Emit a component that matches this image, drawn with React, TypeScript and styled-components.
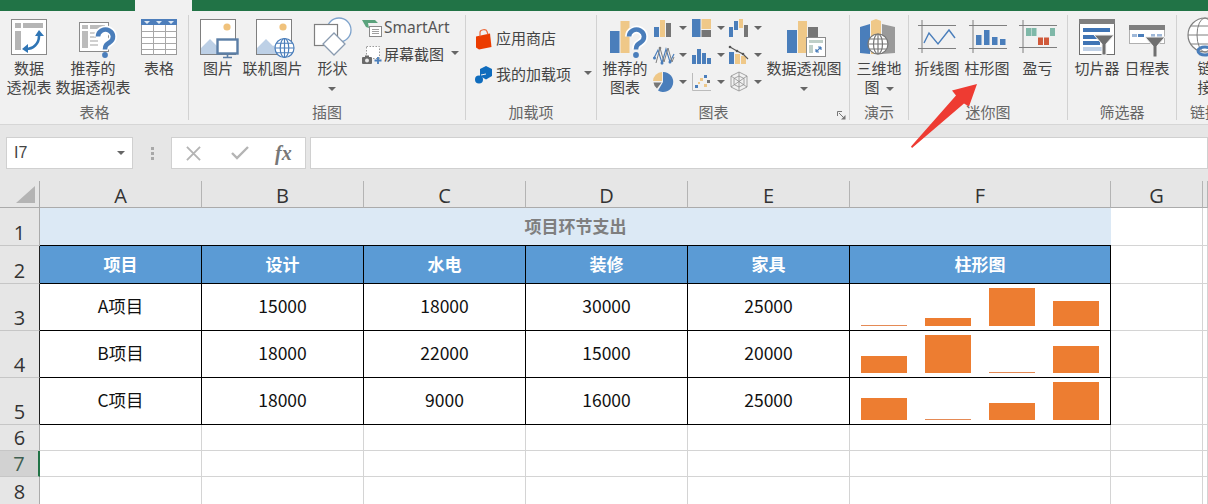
import React from "react";
import styled, { createGlobalStyle } from "styled-components";

const Global = createGlobalStyle`
  html, body { margin: 0; padding: 0; overflow: hidden; background: #fff; }
  body { font-family: "Noto Sans CJK SC", "Noto Sans", sans-serif; color: #444; }
  svg { overflow: visible; display: block; flex: none; }
  * { box-sizing: border-box; }
`;

const Page = styled.div`
  width: 1208px;
  height: 504px;
  overflow: hidden;
  position: relative;
`;

/* ---------- Title strip ---------- */
const TopStrip = styled.div`
  display: flex;
  height: 11px;
  background: #217346;
`;
const ActiveTab = styled.div`
  width: 57px;
  margin-left: 135px;
  background: #f1f1f1;
`;

/* ---------- Ribbon ---------- */
const Ribbon = styled.div`
  display: flex;
  height: 114px;
  background: #f1f1f1;
  border-bottom: 1px solid #d6d6d6;
  overflow: hidden;
`;
const Group = styled.section<{ $w: number }>`
  position: relative;
  flex: none;
  width: ${(p) => p.$w}px;
  height: 113px;
  display: flex;
  flex-direction: column;
  &::after {
    content: "";
    position: absolute;
    right: 0;
    top: 4px;
    bottom: 4px;
    width: 1px;
    background: #d2d2d2;
  }
`;
const GroupBody = styled.div<{ $pad?: number }>`
  display: flex;
  height: 91px;
  padding-left: ${(p) => p.$pad ?? 0}px;
`;
const GroupLabel = styled.div<{ $shift?: number }>`
  font-size: 15px;
  line-height: 19px;
  text-align: center;
  color: #666;
  padding-right: ${(p) => p.$shift ?? 1}px;
`;
const LargeButton = styled.div<{ $w: number }>`
  flex: none;
  width: ${(p) => p.$w}px;
  display: flex;
  flex-direction: column;
  align-items: center;
`;
const IconSlot = styled.div`
  height: 47px;
  padding-top: 7px;
`;
const ButtonLabel = styled.div`
  font-size: 15px;
  line-height: 19px;
  text-align: center;
  white-space: pre-line;
  color: #444;
`;
const Caret = styled.span<{ $inline?: boolean; $gap?: number }>`
  display: inline-block;
  flex: none;
  width: 0;
  height: 0;
  border-left: 4px solid transparent;
  border-right: 4px solid transparent;
  border-top: 4px solid #666;
  vertical-align: middle;
  margin-left: ${(p) => p.$gap ?? (p.$inline ? 6 : 0)}px;
`;
const SmallStack = styled.div<{ $rowH: number; $top: number }>`
  display: grid;
  grid-auto-rows: ${(p) => p.$rowH}px;
  padding-top: ${(p) => p.$top}px;
`;
const SmallRow = styled.div<{ $iconGap: number }>`
  display: flex;
  align-items: center;
  gap: ${(p) => p.$iconGap}px;
  font-size: 15px;
  color: #444;
  white-space: nowrap;
`;
const SmartArtText = styled.span`
  font-family: "Noto Sans", sans-serif;
  font-size: 15.5px;
  color: #555;
`;
const ChartPicker = styled.div`
  display: grid;
  grid-template-columns: 38px 37px 35px;
  grid-auto-rows: 27px;
  padding-top: 3px;
  margin-left: 5px;
  width: 110px;
`;
const ChartPick = styled.div`
  display: flex;
  align-items: center;
  gap: 5px;
`;
const Launcher = styled.div`
  position: absolute;
  right: 4px;
  bottom: 4px;
  width: 9px;
  height: 9px;
`;

/* ---------- Formula bar ---------- */
const FormulaBar = styled.div`
  height: 56px;
  background: #e6e6e6;
  display: flex;
  align-items: flex-start;
  padding: 12px 0 0 6px;
`;
const NameBox = styled.div`
  width: 127px;
  height: 32px;
  background: #fff;
  border: 1px solid #d0d0d0;
  display: flex;
  align-items: center;
  justify-content: space-between;
  padding: 0 7px;
  font-family: "Liberation Sans", sans-serif;
  font-size: 16px;
  color: #444;
`;
const Grip = styled.div`
  width: 38px;
  height: 32px;
  display: flex;
  flex-direction: column;
  align-items: center;
  justify-content: center;
  gap: 2px;
  span { width: 3px; height: 3px; background: #a8a8a8; }
`;
const FxBox = styled.div`
  width: 135px;
  height: 32px;
  background: #fff;
  border: 1px solid #d0d0d0;
  display: flex;
  align-items: center;
  padding-left: 14px;
  gap: 30px;
`;
const FxGlyph = styled.span`
  font-family: "Liberation Serif", serif;
  font-style: italic;
  font-weight: bold;
  font-size: 20px;
  line-height: 1;
  color: #777;
  margin-left: -4px;
`;
const FormulaInput = styled.div`
  flex: 1;
  height: 32px;
  margin-left: 4px;
  background: #fff;
  border: 1px solid #d0d0d0;
`;

/* ---------- Sheet ---------- */
const Sheet = styled.div`
  display: grid;
  grid-template-columns: 40px 162px 162px 162px 162px 162px 261px 92px 1fr;
  grid-template-rows: 27px 38px 38px 47px 47px 47px 26px 26px 28px;
  font-family: "Noto Sans CJK SC", sans-serif;
`;
const Corner = styled.div`
  background: #e6e6e6;
  border-right: 1px solid #ababab;
  border-bottom: 1px solid #ababab;
  padding: 5px 3px 0 0;
  display: flex;
  justify-content: flex-end;
`;
const ColHead = styled.div`
  background: #e6e6e6;
  border-right: 1px solid #b4b4b4;
  border-bottom: 1px solid #ababab;
  font-family: "Open Sans", sans-serif;
  font-size: 20px;
  line-height: 30px;
  text-align: center;
  color: #333;
`;
const RowHead = styled.div<{ $dark?: boolean; $active?: boolean }>`
  background: ${(p) => (p.$active ? "#d2d2d2" : "#e6e6e6")};
  border-right: ${(p) => (p.$active ? "2px solid #217346" : p.$dark ? "1px solid #222" : "1px solid #ababab")};
  border-bottom: 1px solid #c6c6c6;
  font-family: "Open Sans", sans-serif;
  font-size: 20px;
  line-height: 24px;
  color: ${(p) => (p.$active ? "#3f5f50" : "#333")};
  display: flex;
  align-items: flex-end;
  justify-content: center;
`;
const TitleCell = styled.div`
  grid-column: span 6;
  background: #dce9f5;
  border-bottom: 1px solid #000;
  font-size: 17px;
  font-weight: 700;
  color: #7f7f7f;
  display: flex;
  align-items: center;
  justify-content: center;
  padding-bottom: 3px;
`;
const HeadCell = styled.div`
  background: #5b9bd5;
  border-right: 1px solid #000;
  border-bottom: 1px solid #000;
  color: #fff;
  font-size: 17px;
  font-weight: 700;
  display: flex;
  align-items: center;
  justify-content: center;
  padding-bottom: 2px;
`;
const DataCell = styled.div`
  background: #fff;
  border-right: 1px solid #000;
  border-bottom: 1px solid #000;
  color: #111;
  font-size: 17.5px;
  display: flex;
  align-items: center;
  justify-content: center;
  padding-bottom: 4px;
`;
const SparkCell = styled.div`
  background: #fff;
  border-right: 1px solid #000;
  border-bottom: 1px solid #000;
  display: flex;
  align-items: flex-end;
  gap: 18px;
  padding: 0 0 4px 11px;
`;
const SparkBar = styled.div<{ $h: number }>`
  width: 46px;
  height: ${(p) => p.$h}px;
  background: ${(p) => (p.$h < 2 ? "#e58a55" : "#ed7d31")};
`;
const Blank = styled.div`
  background: #fff;
  border-right: 1px solid #d4d4d4;
  border-bottom: 1px solid #d4d4d4;
`;
const ArrowMark = styled.svg`
  position: absolute;
  left: 905px;
  top: 78px;
`;

/* ---------- Icons ---------- */
const BLUE = "#4a7ebb";
const YEL = "#efc888";
const GRY = "#767676";

const Big = ({ children }: { children: React.ReactNode }) => (
  <svg width="40" height="40" viewBox="0 0 40 40">{children}</svg>
);
const Mini = ({ children, w = 20, h = 18, dy = 0 }: { children: React.ReactNode; w?: number; h?: number; dy?: number }) => (
  <svg width={w} height={h} viewBox={`0 ${-dy} ${w} ${h}`}>{children}</svg>
);
const Question = ({ x, y, s = 1 }: { x: number; y: number; s?: number }) => (
  <g transform={`translate(${x} ${y}) scale(${s})`} fill="none">
    <path d="M-7 -6.5 a7.5 7 0 1 1 11.5 6 c-3 2 -4.5 3 -4.5 7" stroke="#fff" strokeWidth="8" />
    <path d="M-7 -6.5 a7.5 7 0 1 1 11.5 6 c-3 2 -4.5 3 -4.5 7" stroke={BLUE} strokeWidth="4.6" />
    <circle cx="0" cy="12" r="2.9" fill={BLUE} />
  </g>
);
const Globe = ({ cx, cy, r, c = BLUE }: { cx: number; cy: number; r: number; c?: string }) => (
  <g fill="#fff" stroke={c} strokeWidth="1.2">
    <circle cx={cx} cy={cy} r={r} />
    <ellipse cx={cx} cy={cy} rx={r * 0.45} ry={r} fill="none" />
    <path d={`M${cx - r} ${cy}h${2 * r}M${cx - r * 0.85} ${cy - r * 0.5}h${1.7 * r}M${cx - r * 0.85} ${cy + r * 0.5}h${1.7 * r}M${cx} ${cy - r}v${2 * r}`} fill="none" />
  </g>
);

const PivotIcon = () => (
  <Big>
    <rect x="2.5" y="1.5" width="35" height="35" fill="#fff" stroke="#8a8a8a" />
    <path d="M6 5h6v5H6zM14 5h20v5H14zM6 13h6v19H6z" fill="#b5b5b5" />
    <path d="M17 31c7 0 13-5 13-13" fill="none" stroke="#2f75b5" strokeWidth="2.6" />
    <path d="M30 12l5 6h-9zM13 31l6-5v9z" fill="#2f75b5" />
  </Big>
);
const RecPivotIcon = () => (
  <Big>
    <rect x="6.5" y="4.5" width="29" height="29" fill="#fff" stroke="#8a8a8a" />
    <path d="M9 7h6v4H9zM17 7h15v4H17zM9 13h6v17H9z" fill="#bcbcbc" />
    <path d="M17 15h8M17 19h6M17 23h8M17 27h8" stroke="#d0d0d0" strokeWidth="2" />
    <Question x={32} y={25} />
  </Big>
);
const TableIcon = () => (
  <Big>
    <rect x="2.5" y="1.5" width="35" height="35" fill="#fff" stroke="#9a9a9a" />
    <path d="M2.5 13.5h35M2.5 19.5h35M2.5 25.5h35M2.5 31.5h35M14.5 7v30M26.5 7v30" stroke="#a8a8a8" />
    <rect x="2" y="1" width="36" height="6" fill="#4d7ebb" />
    <path d="M5 3h6l-3 3zM17 3h6l-3 3zM29 3h6l-3 3z" fill="#dfe9f4" />
  </Big>
);
const Landscape = ({ x }: { x: number }) => (
  <>
    <rect x={x + 0.5} y="1.5" width="35" height="35" fill="#fff" stroke="#7f7f7f" />
    <path d={`M${x + 1} 36V30l9-9 7 7 4-2 14 10z`} fill="#bdd0e6" />
    <circle cx={x + 27} cy="9" r="3.6" fill="#f0c27c" />
  </>
);
const PictureIcon = () => (
  <Big>
    <Landscape x={2} />
    <rect x="19.5" y="21.5" width="20" height="14" fill="#fff" stroke="#5b7ea6" strokeWidth="2.4" />
    <path d="M29.5 36v3M25 39.5h9" stroke="#5b7ea6" strokeWidth="1.6" />
  </Big>
);
const OnlinePictureIcon = () => (
  <Big>
    <Landscape x={3} />
    <Globe cx={31.5} cy={30} r={9.5} />
  </Big>
);
const ShapesIcon = () => (
  <Big>
    <circle cx="26" cy="12" r="12" fill="#fff" stroke="#7ea3cc" strokeWidth="1.3" />
    <rect x="1.5" y="6.5" width="23" height="21" fill="#fff" stroke="#7f7f7f" strokeWidth="1.2" />
    <path d="M21 15l11 11-11 11-11-11z" fill="#fff" stroke="#8a9bb0" strokeWidth="1.3" />
  </Big>
);
const SmartArtIcon = () => (
  <Mini w={22} h={19} dy={1}>
    <path d="M1 1h13l3 3-10 0 1 5-3-1-4-7z" fill="#5aa27c" />
    <rect x="8.5" y="7.5" width="12" height="10" fill="#fff" stroke="#8a8a8a" />
    <path d="M11 10.5h7M11 12.5h7M11 14.5h7" stroke="#a0a0a0" />
  </Mini>
);
const ScreenshotIcon = () => (
  <Mini w={22} h={19} dy={2}>
    <rect x="5.5" y="0.5" width="13" height="12" fill="#fff" stroke="#9a9a9a" strokeDasharray="1.5 1.5" />
    <rect x="1" y="11" width="10" height="7" rx="1" fill="#6a6a6a" />
    <rect x="4" y="9.5" width="4" height="2" fill="#6a6a6a" />
    <circle cx="6" cy="14.5" r="2" fill="#e8e8e8" />
    <path d="M17 11v7M13.5 14.5h7" stroke="#4a7ebb" strokeWidth="1.8" />
  </Mini>
);
const StoreIcon = () => (
  <Mini w={17} h={21} dy={1.5}>
    <path d="M1 8l14-3 1.5 13.5L4 21l-3-2z" fill="#eb3c00" />
    <path d="M5 8V4c0-3 6-4 7-1l1 3" fill="none" stroke="#eb6a3c" strokeWidth="1.2" />
  </Mini>
);
const AddinIcon = () => (
  <Mini w={17} h={18} dy={2}>
    <path d="M11 0l6 3v7l-6 3.5-6-3.500V3z" fill="#0f6cbd" />
    <circle cx="4" cy="13.500" r="4" fill="#0f6cbd" />
    <path d="M6 9l5-1" stroke="#f1f1f1" strokeWidth="1" />
  </Mini>
);
const RecChartIcon = () => (
  <Big>
    <rect x="5" y="13" width="9.500" height="22" fill={BLUE} />
    <rect x="15.500" y="3" width="9" height="32" fill={YEL} />
    <rect x="25.500" y="9" width="8" height="3" fill={GRY} />
    <Question x={31} y={25} />
  </Big>
);
const PivotChartIcon = () => (
  <Big>
    <rect x="3" y="12" width="10" height="23" fill={BLUE} />
    <rect x="14" y="3" width="9" height="32" fill={YEL} />
    <rect x="24" y="9" width="10" height="10" fill={GRY} />
    <rect x="22.500" y="19.500" width="19" height="19" fill="#fff" stroke="#8a8a8a" />
    <path d="M25 22h14v3H25zM25 27h4v8h-4z" fill="#bfcfc8" />
    <path d="M32 34l5-5M37 29h-3M37 29v3M32 34h3M32 34v-3" stroke="#4a7ebb" strokeWidth="1.2" fill="none" />
  </Big>
);
const MapIcon = () => (
  <Big>
    <path d="M1 9l10-3v30l-10-1z" fill={BLUE} />
    <path d="M12 3l5-2 5 2v33H12z" fill={YEL} />
    <path d="M23 6l13 3v26l-13 1z" fill="#9a9a9a" />
    <Globe cx={19} cy={26} r={10} c="#777" />
  </Big>
);
const FrameLines = ({ x, top, bottom }: { x: number; top: number; bottom: number }) => (
  <path d={`M${x} ${top}h38M${x} ${bottom}h38M${x + 4} 2v33`} stroke="#7f7f7f" strokeWidth="1" fill="none" />
);
const LineSparkIcon = () => (
  <Big>
    <FrameLines x={1} top={7.5} bottom={30.5} />
    <path d="M7 25l5-10 9 11 11-14 6 8" fill="none" stroke={BLUE} strokeWidth="1.4" />
  </Big>
);
const ColumnSparkIcon = () => (
  <Big>
    <FrameLines x={2} top={7.5} bottom={30.5} />
    <path d="M9 17h5.500v10H9zM17 12h5.500v15H17zM25 19h5.500v8H25zM33 21h5.500v6H33z" fill={BLUE} />
  </Big>
);
const WinLossIcon = () => (
  <Big>
    <FrameLines x={1} top={7.5} bottom={29.5} />
    <path d="M8 10h5v8H8zM13.500 10h5v8h-5zM32 10h5v8h-5z" fill="#7fb8a8" />
    <path d="M20 19.500h5V27h-5zM26 19.500h5V27h-5z" fill="#d0593a" />
  </Big>
);
const Funnel = ({ x, y, s = 1 }: { x: number; y: number; s?: number }) => (
  <g transform={`translate(${x} ${y}) scale(${s})`}>
    <path d="M0 0h20l-8 9v11h-4V9z" fill="#6f6f6f" stroke="#f1f1f1" strokeWidth="1" />
  </g>
);
const SlicerIcon = () => (
  <Big>
    <rect x="2.500" y="1.500" width="35" height="35" fill="#fff" stroke="#6f6f6f" />
    <rect x="2" y="1" width="36" height="5" fill="#7f7f7f" />
    <path d="M6 10h27v4H6zM6 17h17v4H6zM6 23h17v4H6z" fill="#3f74b5" />
    <rect x="6" y="29" width="20" height="4" fill="#bfd0e6" />
    <Funnel x={17} y={17} />
  </Big>
);
const TimelineIcon = () => (
  <Big>
    <rect x="2.500" y="7.500" width="35" height="18" fill="#fff" stroke="#b0b0b0" />
    <rect x="2" y="7" width="36" height="5" fill="#7f7f7f" />
    <path d="M5 16h5v3H5zM11 16h6v3h-6zM24 16h4v3h-4zM30 16h5v3h-5z" fill="#9fb8d8" />
    <path d="M11 16h6v3h-6z" fill="#4a7ebb" />
    <Funnel x={18} y={19} />
  </Big>
);
const LinkIcon = () => (
  <Big>
    <circle cx="20" cy="17" r="17" fill="#fff" stroke="#7f7f7f" strokeWidth="1.2" />
    <ellipse cx="20" cy="17" rx="8" ry="17" fill="none" stroke="#7f7f7f" />
    <path d="M3 17h34M6 8h28M6 26h28" stroke="#7f7f7f" />
    <ellipse cx="20" cy="33" rx="7" ry="4" fill="none" stroke="#4a7ebb" strokeWidth="3" />
  </Big>
);

const ColumnMini = () => (
  <Mini><path d="M0 8h5v10H0z" fill={BLUE} /><path d="M6 1h5v17H6z" fill={YEL} /><path d="M12 4h5v14h-5z" fill={GRY} /></Mini>
);
const TreemapMini = () => (
  <Mini><path d="M0 0h8.500v18H0z" fill={BLUE} /><path d="M9.500 0H19v10H9.500z" fill={YEL} /><path d="M9.500 11H19v7H9.500z" fill={GRY} /></Mini>
);
const WaterfallMini = () => (
  <Mini><path d="M0 8h4v10H0zM5 2h4v9H5z" fill={BLUE} /><path d="M10 0h4v9h-4z" fill={YEL} /><path d="M15 6h4v12h-4z" fill={GRY} /></Mini>
);
const LineMini = () => (
  <Mini>
    <path d="M0 12L4 4l4 13 4-14 4 13 4-8" fill="none" stroke={BLUE} strokeWidth="1.2" />
    <path d="M2 17L6 2l4 14 4-14 4 14 2-5" fill="none" stroke="#7f7f7f" strokeWidth="1" />
    <circle cx="0.500" cy="12" r="1.500" fill={BLUE} /><circle cx="6" cy="2" r="1.300" fill="#7f7f7f" /><circle cx="8" cy="17" r="1.500" fill={BLUE} /><circle cx="16" cy="16" r="1.500" fill={BLUE} />
  </Mini>
);
const HistogramMini = () => (
  <Mini><path d="M0 9h4v9H0zM5 3h4v15H5zM10 7h4v11h-4zM15 12h4v6h-4z" fill={BLUE} /></Mini>
);
const ComboMini = () => (
  <Mini>
    <path d="M0 6h5v12H0z" fill={BLUE} /><path d="M6 8h5v10H6zM12 10h5v8h-5z" fill={YEL} />
    <path d="M1 1l7 4 6 3 5 5" fill="none" stroke="#555" strokeWidth="1.1" />
    <circle cx="1" cy="1" r="1.300" fill="#555" /><circle cx="8" cy="5" r="1.300" fill="#555" /><circle cx="14" cy="8" r="1.300" fill="#555" />
  </Mini>
);
const PieMini = () => (
  <Mini>
    <path d="M9 9V-1a10 10 0 1 1-5 18.500z" fill={BLUE} />
    <path d="M8 8V-1A9.500 9.500 0 0 0-1 8z" fill={YEL} />
    <path d="M7.500 9.500H-0.500a9 9 0 0 0 3.500 6z" fill={GRY} />
  </Mini>
);
const ScatterMini = () => (
  <Mini>
    <path d="M0.500 0v17.500H19" fill="none" stroke="#bbb" />
    <path d="M3 12h3v3H3z" fill={BLUE} /><path d="M8 5h3v3H8zM12 11h3v3h-3z" fill={YEL} /><path d="M12 2h3v3h-3z" fill={BLUE} /><path d="M15 7h3v3h-3z" fill={GRY} /><path d="M6 9h2v2H6z" fill={YEL} />
  </Mini>
);
const RadarMini = () => (
  <Mini>
    <g fill="none" stroke="#8f8f8f" strokeWidth="0.800">
      <path d="M10 -1l8 4v11l-8 4-8-4V3z" />
      <path d="M10 3l5 2.500v6L10 14l-5-2.500v-6z" />
      <path d="M10 -1v19M2 3l16 11M18 3L2 14" />
    </g>
  </Mini>
);

const pickers = [
  <ColumnMini />, <TreemapMini />, <WaterfallMini />,
  <LineMini />, <HistogramMini />, <ComboMini />,
  <PieMini />, <ScatterMini />, <RadarMini />,
];

const columns = ["A", "B", "C", "D", "E", "F", "G"];
const headers = ["项目", "设计", "水电", "装修", "家具", "柱形图"];
const rows = [
  { no: 3, cells: ["A项目", "15000", "18000", "30000", "25000"], bars: [1, 8, 38, 25] },
  { no: 4, cells: ["B项目", "18000", "22000", "15000", "20000"], bars: [17, 38, 1, 27] },
  { no: 5, cells: ["C项目", "18000", "9000", "16000", "25000"], bars: [22, 1, 17, 38] },
];

const Big2 = ({ w, icon, label }: { w: number; icon: React.ReactNode; label: React.ReactNode }) => (
  <LargeButton $w={w}>
    <IconSlot>{icon}</IconSlot>
    <ButtonLabel>{label}</ButtonLabel>
  </LargeButton>
);

export default function App() {
  return (
    <Page>
      <Global />
      <TopStrip><ActiveTab /></TopStrip>
      <Ribbon>
        <Group $w={189}>
          <GroupBody $pad={5}>
            <Big2 w={48} icon={<PivotIcon />} label={"数据\n透视表"} />
            <Big2 w={80} icon={<RecPivotIcon />} label={"推荐的\n数据透视表"} />
            <Big2 w={52} icon={<TableIcon />} label="表格" />
          </GroupBody>
          <GroupLabel $shift={0}>表格</GroupLabel>
        </Group>
        <Group $w={277}>
          <GroupBody $pad={6}>
            <Big2 w={46} icon={<PictureIcon />} label="图片" />
            <Big2 w={63} icon={<OnlinePictureIcon />} label="联机图片" />
            <Big2 w={57} icon={<ShapesIcon />} label={<>形状{"\n"}<Caret /></>} />
            <SmallStack $rowH={26} $top={3}>
              <SmallRow $iconGap={1}><SmartArtIcon /><SmartArtText>SmartArt</SmartArtText></SmallRow>
              <SmallRow $iconGap={1}><ScreenshotIcon />屏幕截图<Caret $inline /></SmallRow>
            </SmallStack>
          </GroupBody>
          <GroupLabel>插图</GroupLabel>
        </Group>
        <Group $w={131}>
          <GroupBody $pad={9}>
            <SmallStack $rowH={36} $top={8}>
              <SmallRow $iconGap={4}><StoreIcon />应用商店</SmallRow>
              <SmallRow $iconGap={4}><AddinIcon />我的加载项<Caret $inline $gap={9} /></SmallRow>
            </SmallStack>
          </GroupBody>
          <GroupLabel>加载项</GroupLabel>
        </Group>
        <Group $w={253}>
          <GroupBody $pad={4}>
            <Big2 w={48} icon={<RecChartIcon />} label={"推荐的\n图表"} />
            <ChartPicker>
              {pickers.map((icon, i) => (
                <ChartPick key={i}>{icon}<Caret /></ChartPick>
              ))}
            </ChartPicker>
            <Big2 w={80} icon={<PivotChartIcon />} label={<>数据透视图{"\n"}<Caret /></>} />
          </GroupBody>
          <GroupLabel $shift={20}>图表</GroupLabel>
          <Launcher>
            <svg width="9" height="9" viewBox="0 0 9 9">
              <path d="M0.500 5V0.500H5M2 2l5 5" fill="none" stroke="#777" />
              <path d="M8.500 4v4.500H4z" fill="#777" />
            </svg>
          </Launcher>
        </Group>
        <Group $w={59}>
          <GroupBody>
            <Big2 w={58} icon={<MapIcon />} label={<>三维地{"\n"}图<Caret $inline /></>} />
          </GroupBody>
          <GroupLabel>演示</GroupLabel>
        </Group>
        <Group $w={159}>
          <GroupBody $pad={3}>
            <Big2 w={50} icon={<LineSparkIcon />} label="折线图" />
            <Big2 w={50} icon={<ColumnSparkIcon />} label="柱形图" />
            <Big2 w={51} icon={<WinLossIcon />} label="盈亏" />
          </GroupBody>
          <GroupLabel>迷你图</GroupLabel>
        </Group>
        <Group $w={109}>
          <GroupBody $pad={4}>
            <Big2 w={50} icon={<SlicerIcon />} label="切片器" />
            <Big2 w={50} icon={<TimelineIcon />} label="日程表" />
          </GroupBody>
          <GroupLabel>筛选器</GroupLabel>
        </Group>
        <Group $w={57}>
          <GroupBody>
            <Big2 w={56} icon={<LinkIcon />} label={"链\n接"} />
          </GroupBody>
          <GroupLabel>链接</GroupLabel>
        </Group>
      </Ribbon>

      <FormulaBar>
        <NameBox>I7<Caret /></NameBox>
        <Grip><span /><span /><span /></Grip>
        <FxBox>
          <svg width="15" height="15" viewBox="0 0 16 16">
            <path d="M1 1l14 14M15 1L1 15" stroke="#b4b4b4" strokeWidth="2" />
          </svg>
          <svg width="18" height="14" viewBox="0 0 18 14">
            <path d="M1 7l5 5L17 1" fill="none" stroke="#b4b4b4" strokeWidth="2.400" />
          </svg>
          <FxGlyph>fx</FxGlyph>
        </FxBox>
        <FormulaInput />
      </FormulaBar>

      <Sheet>
        <Corner>
          <svg width="20" height="18" viewBox="0 0 20 18"><path d="M19 0v17H0z" fill="#b4b4b4" /></svg>
        </Corner>
        {columns.map((c) => <ColHead key={c}>{c}</ColHead>)}
        <ColHead />

        <RowHead>1</RowHead>
        <TitleCell>项目环节支出</TitleCell>
        <Blank /><Blank />

        <RowHead $dark>2</RowHead>
        {headers.map((h) => <HeadCell key={h}>{h}</HeadCell>)}
        <Blank /><Blank />

        {rows.map((r) => (
          <React.Fragment key={r.no}>
            <RowHead $dark>{r.no}</RowHead>
            {r.cells.map((c, i) => <DataCell key={i}>{c}</DataCell>)}
            <SparkCell>
              {r.bars.map((h, i) => <SparkBar key={i} $h={h} />)}
            </SparkCell>
            <Blank /><Blank />
          </React.Fragment>
        ))}

        {[6, 7, 8].map((n) => (
          <React.Fragment key={n}>
            <RowHead $active={n === 7}>{n}</RowHead>
            {Array.from({ length: 8 }, (_, i) => <Blank key={i} />)}
          </React.Fragment>
        ))}
      </Sheet>

      <ArrowMark width="76" height="72" viewBox="905 78 76 72">
        <path d="M977 84L952 90.500l4 5L911 146.500l1 1.500L964 103.500l5 3z" fill="#ee3b32" />
      </ArrowMark>
    </Page>
  );
}
